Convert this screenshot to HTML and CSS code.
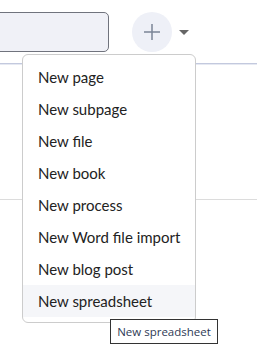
FILE: index.html
```html
<!DOCTYPE html>
<html lang="en">
<head>
    <meta charset="UTF-8">
    <meta name="viewport" content="width=device-width, initial-scale=1.0">
    <title>New menu</title>
    <link rel="stylesheet" href="styles.css">
</head>
<body>
    <div class="header">
        <input type="text" class="search">
        <button class="add-btn" aria-label="Create">
            <svg width="18" height="18" viewBox="0 0 18 18">
                <path d="M9 1V17M1 9H17" stroke="#7b8496" stroke-width="1.5" fill="none"/>
            </svg>
        </button>
        <span class="caret"></span>
    </div>

    <div class="content">
        <div class="divider"></div>
    </div>

    <!-- Dropdown opened from the + button -->
    <ul class="menu">
        <li>New page</li>
        <li>New subpage</li>
        <li>New file</li>
        <li>New book</li>
        <li>New process</li>
        <li>New Word file import</li>
        <li>New blog post</li>
        <li class="hover">New spreadsheet</li>
    </ul>

    <div class="tooltip">New spreadsheet</div>
</body>
</html>
```

FILE: styles.css
```css
body {
    margin: 0;
    padding: 0;
    background: #fff;
    font-family: Lato, "Noto Sans", sans-serif;
    color: #222;
    position: relative;
    height: 362px;
    overflow: hidden;
}
.header {
    display: flex;
    align-items: flex-start;
    height: 64px;
    box-sizing: border-box;
    padding-top: 12px;
    border-bottom: 1px solid #c3c9de;
    box-shadow: 0 1px 0 #e6e9f2;
}
.search {
    margin: 0 0 0 -20px;
    width: 129px;
    height: 40px;
    box-sizing: border-box;
    border: 1px solid #70737d;
    border-radius: 5px;
    background: #f0f1f7;
}
.add-btn {
    margin-left: 23px;
    width: 40px;
    height: 40px;
    border: none;
    border-radius: 50%;
    background: #eef0f7;
    padding: 0;
    display: flex;
    align-items: center;
    justify-content: center;
}
.caret {
    margin: 18px 0 0 7px;
    width: 0;
    height: 0;
    border-left: 5px solid transparent;
    border-right: 5px solid transparent;
    border-top: 5px solid #666;
}
.content {
    padding-top: 135px;
}
.divider {
    border-top: 1px solid #dcdcdc;
}
.menu {
    position: absolute;
    left: 22px;
    top: 54px;
    width: 174px;
    box-sizing: border-box;
    margin: 0;
    padding: 6px 0 5px;
    list-style: none;
    background: #fff;
    border: 1px solid #ccc;
    border-radius: 6px;
}
.menu li {
    height: 32px;
    line-height: 33px;
    padding-left: 15px;
    font-size: 15px;
    color: #222;
}
.menu li.hover {
    background: #f5f6f9;
}
.tooltip {
    position: absolute;
    left: 110px;
    top: 319px;
    width: 108px;
    height: 25px;
    box-sizing: border-box;
    border: 1px solid #333;
    background: #fff;
    font-family: "Open Sans", "Noto Sans", sans-serif;
    font-size: 11.5px;
    line-height: 23px;
    color: #2e3a55;
    text-align: center;
}
```
